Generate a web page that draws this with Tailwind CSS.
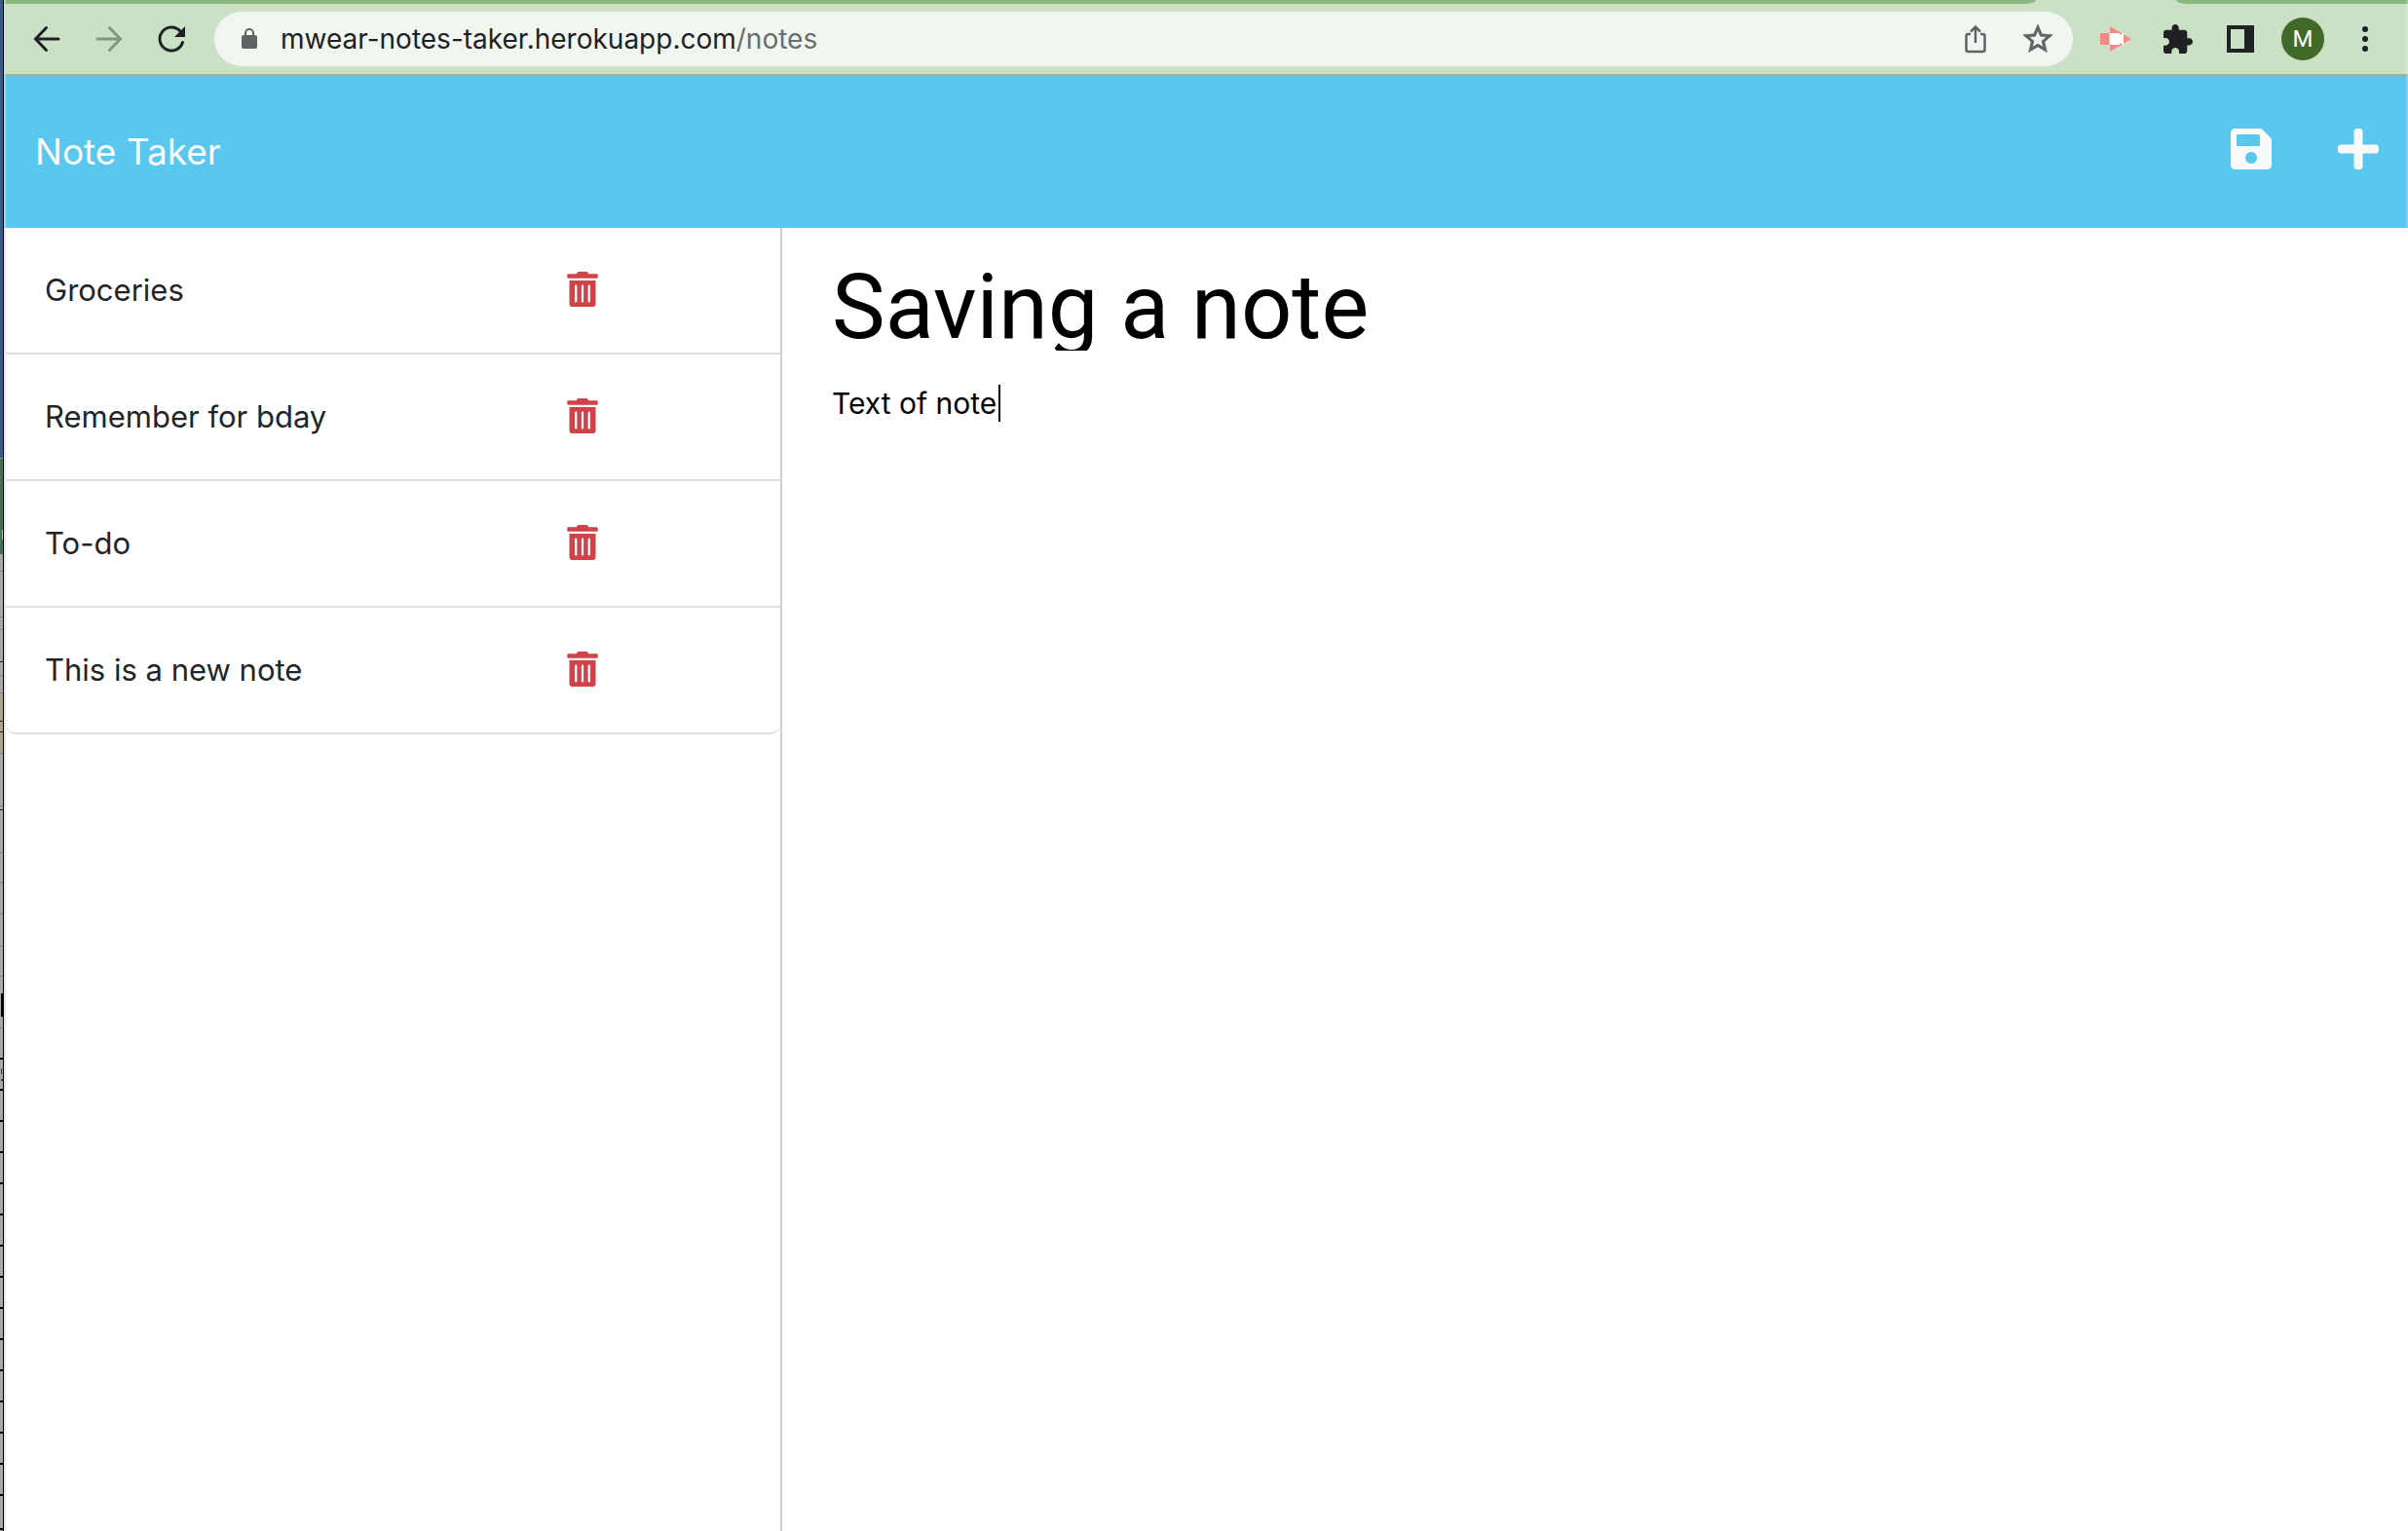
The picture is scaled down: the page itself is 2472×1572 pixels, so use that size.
<!DOCTYPE html>
<html lang="en">
<head>
<meta charset="utf-8">
<title>Note Taker</title>
<script src="https://cdn.jsdelivr.net/npm/@tailwindcss/browser@4"></script>
</head>
<body class="relative flex min-h-screen bg-white font-['Inter',sans-serif] text-[#212529]">

  <!-- Sliver of the window behind -->
  <div class="w-1 shrink-0 overflow-hidden border-r border-black bg-[#a9a9a7]" aria-hidden="true">
    <svg class="block h-[1572px] w-[3px]" viewBox="0 0 3 1572" shape-rendering="crispEdges">
      <rect width="3" height="470" fill="#3d5a85"/>
      <rect y="470" width="3" height="1" fill="#8b9a94"/>
      <rect y="471" width="3" height="98" fill="#4a6f57"/>
      <rect x="2" y="544" width="1" height="10" fill="#b6c4b9"/>
      <rect y="711" width="3" height="62" fill="#aca48e"/>
      <path d="M0 586.500h3M0 633.500h3M0 646.500h3M0 693.500h3M0 711.500h3M0 773.500h3M0 827.500h3M0 875.500h3M0 906.500h3M0 938.500h3M0 971.500h3M0 1002.500h3M0 1055.500h3" stroke="#858583" fill="none"/>
      <path d="M0 679.500h3M0 740.500h3M0 751.500h3M0 831.500h3" stroke="#222" fill="none"/>
      <rect x="1" y="1020" width="2" height="24" fill="#000"/>
      <rect x="1" y="1097" width="1" height="6" fill="#333"/>
      <rect x="1" y="1108" width="2" height="2" fill="#333"/>
      <path d="M0 1087h3M0 1119h3M0 1151h3M0 1183h3M0 1215h3M0 1247h3M0 1279h3M0 1311h3M0 1343h3M0 1375h3M0 1407h3M0 1439h3M0 1471h3M0 1503h3M0 1535h3M0 1570h3" stroke="#000" stroke-width="2" fill="none"/>
    </svg>
  </div>

  <div class="flex min-w-0 flex-1 flex-col">
    <!-- Browser chrome -->
    <div class="bg-[#cae1c6]">
      <div class="flex h-1 justify-between">
        <div class="mr-[144px] flex-1 rounded-br-[12px_4px] bg-[#88b77f]"></div>
        <div class="w-[238px] rounded-bl-[12px_4px] bg-[#88b77f]"></div>
      </div>
      <div class="flex h-[74px] items-center border-b-2 border-[#a5b09c] px-3">
        <button aria-label="Back" class="flex w-16 justify-center"><svg class="h-7 w-7" viewBox="0 0 28 28" fill="none" stroke="#202124" stroke-width="3" stroke-linecap="round"><path d="M26 14H3M13.500 2.500L2.500 14l11 11.500"/></svg></button>
        <button aria-label="Forward" class="flex w-16 justify-center"><svg class="h-7 w-7" viewBox="0 0 28 28" fill="none" stroke="#85957f" stroke-width="3" stroke-linecap="round"><path d="M2 14h23M14.500 2.500l11 11.500-11 11.500"/></svg></button>
        <button aria-label="Reload" class="flex w-16 justify-center"><svg class="h-7 w-7" viewBox="0 0 28 28" fill="none"><path d="M25.500 17.500A12 12 0 1 1 23 6" stroke="#202124" stroke-width="3" stroke-linecap="round"/><path d="M28 1v11H17z" fill="#202124"/></svg></button>
        <div class="ml-3 flex h-14 min-w-0 flex-1 items-center rounded-full bg-[#f1f7f0] pl-7 pr-1">
          <svg class="h-[22px] w-4 shrink-0" viewBox="0 0 16 22"><rect y="7" width="16" height="14" rx="2" fill="#5f6368"/><path d="M4 8V5a4 4 0 0 1 8 0v3" fill="none" stroke="#5f6368" stroke-width="2"/></svg>
          <div role="textbox" aria-label="Address" class="ml-6 flex-1 truncate text-[28px] leading-10 text-[#202124]">mwear-notes-taker.herokuapp.com<span class="text-[#6a6d6b]">/notes</span></div>
          <button aria-label="Share" class="flex w-16 justify-center"><svg class="h-[30px] w-6" viewBox="0 0 24 30" fill="none" stroke="#5f6368" stroke-width="2.500"><path d="M7 10H4.500a2 2 0 0 0-2 2v14a2 2 0 0 0 2 2h15a2 2 0 0 0 2-2V12a2 2 0 0 0-2-2H17M12 19V2.500M7 7.500l5-5 5 5"/></svg></button>
          <button aria-label="Bookmark this page" class="flex w-16 justify-center"><svg class="h-[30px] w-[30px]" viewBox="2 2 20 20" fill="#5f6368" stroke="#5f6368" stroke-width="0.500"><path d="M22 9.240l-7.190-.62L12 2 9.190 8.630 2 9.240l5.460 4.730L5.820 21 12 17.270 18.180 21l-1.630-7.030L22 9.240zM12 15.400l-3.760 2.270 1-4.280-3.320-2.880 4.380-.38L12 6.100l1.710 4.040 4.380.38-3.320 2.880 1 4.280L12 15.400z"/></svg></button>
        </div>
        <button aria-label="Screen recorder" class="ml-3 flex w-16 justify-center"><svg class="h-[26px] w-8" viewBox="0 0 32 26"><path d="M0 7h10V0l22 13-22 13v-7H0z" fill="#f28b88"/><path d="M9.500 7H19q1.500 0 1.500 2l3.500-2.500v13L20.500 17q0 2-1.500 2H9.500z" fill="#fff"/></svg></button>
        <button aria-label="Extensions" class="flex w-16 justify-center"><svg class="h-[30px] w-[30px]" viewBox="2 1 21 21" fill="#202124"><path d="M20.500 11H19V7c0-1.100-.9-2-2-2h-4V3.500C13 2.120 11.880 1 10.500 1S8 2.120 8 3.500V5H4c-1.100 0-1.990.9-1.990 2v3.800H3.500c1.490 0 2.700 1.210 2.700 2.700s-1.210 2.700-2.700 2.700H2V20c0 1.100.9 2 2 2h3.800v-1.500c0-1.490 1.210-2.700 2.700-2.700 1.490 0 2.700 1.210 2.700 2.700V22H17c1.100 0 2-.9 2-2v-4h1.500c1.380 0 2.500-1.120 2.500-2.500S21.880 11 20.500 11z"/></svg></button>
        <button aria-label="Side panel" class="flex w-16 justify-center"><svg class="h-7 w-7" viewBox="0 0 28 28"><path fill="#202124" fill-rule="evenodd" d="M0 0h28v28H0zM4 4v20h14V4z"/></svg></button>
        <button aria-label="Profile" class="flex w-16 justify-center"><span class="flex h-11 w-11 items-center justify-center rounded-full bg-[#416a29] font-['Roboto',sans-serif] text-[24px] text-white">M</span></button>
        <button aria-label="Menu" class="flex w-16 justify-center"><svg class="h-7 w-7" viewBox="0 0 28 28" fill="#202124"><circle cx="14" cy="4" r="3"/><circle cx="14" cy="14" r="3"/><circle cx="14" cy="24" r="3"/></svg></button>
      </div>
    </div>

    <!-- App -->
    <nav class="flex h-[156px] items-center justify-between bg-[#5ac8ee] pl-8 pr-[30px] text-[#f8f9fa]">
      <a href="/" class="text-[37px] leading-[56px]">Note Taker</a>
      <div class="flex gap-[68px] pb-1.5">
        <button aria-label="Save note"><svg class="block h-12 w-[42px]" viewBox="0 0 448 512" fill="currentColor"><path d="M433.941 129.941l-83.882-83.882A48 48 0 0 0 316.118 32H48C21.490 32 0 53.490 0 80v352c0 26.510 21.490 48 48 48h352c26.510 0 48-21.490 48-48V163.882a48 48 0 0 0-14.059-33.941zM224 416c-35.346 0-64-28.654-64-64 0-35.346 28.654-64 64-64s64 28.654 64 64c0 35.346-28.654 64-64 64zm96-304.520V212c0 6.627-5.373 12-12 12H76c-6.627 0-12-5.373-12-12V108c0-6.627 5.373-12 12-12h228.520c3.183 0 6.235 1.264 8.485 3.515l3.480 3.480A11.996 11.996 0 0 1 320 111.480z"/></svg></button>
        <button aria-label="New note"><svg class="block h-12 w-[42px]" viewBox="0 0 448 512" fill="currentColor"><path d="M416 208H272V64c0-17.670-14.330-32-32-32h-32c-17.670 0-32 14.330-32 32v144H32c-17.670 0-32 14.330-32 32v32c0 17.670 14.330 32 32 32h144v144c0 17.670 14.330 32 32 32h32c17.670 0 32-14.330 32-32V304h144c17.670 0 32-14.330 32-32v-32c0-17.670-14.330-32-32-32z"/></svg></button>
      </div>
    </nav>

    <svg class="hidden"><symbol id="trash" viewBox="0 0 448 512"><path fill="currentColor" d="M32 464a48 48 0 0 0 48 48h288a48 48 0 0 0 48-48V128H32zm272-256a16 16 0 0 1 32 0v224a16 16 0 0 1-32 0zm-96 0a16 16 0 0 1 32 0v224a16 16 0 0 1-32 0zm-96 0a16 16 0 0 1 32 0v224a16 16 0 0 1-32 0zM432 32H312l-9.400-18.700A24 24 0 0 0 281.100 0H166.800a23.720 23.720 0 0 0-21.400 13.300L136 32H16A16 16 0 0 0 0 48v32a16 16 0 0 0 16 16h416a16 16 0 0 0 16-16V48a16 16 0 0 0-16-16z"/></symbol></svg>

    <div class="flex flex-1">
      <aside class="w-[799px] shrink-0 border-r-2 border-[#d0d0d0] pl-0.5">
        <ul class="overflow-hidden rounded-b-[10px] border-b-2 border-[#dfdfdf] text-[31px] leading-[48px] divide-y-2 divide-[#dfdfdf]">
          <li class="flex h-[130px] items-center justify-between pl-10 pr-[187px]"><span>Groceries</span><button aria-label="Delete Groceries" class="pb-0.5 text-[#cf4349]"><svg class="block h-9 w-8"><use href="#trash"/></svg></button></li>
          <li class="flex h-[130px] items-center justify-between pl-10 pr-[187px]"><span>Remember for bday</span><button aria-label="Delete Remember for bday" class="pb-0.5 text-[#cf4349]"><svg class="block h-9 w-8"><use href="#trash"/></svg></button></li>
          <li class="flex h-[130px] items-center justify-between pl-10 pr-[187px]"><span>To-do</span><button aria-label="Delete To-do" class="pb-0.5 text-[#cf4349]"><svg class="block h-9 w-8"><use href="#trash"/></svg></button></li>
          <li class="flex h-32 items-center justify-between pl-10 pr-[187px]"><span>This is a new note</span><button aria-label="Delete This is a new note" class="pb-0.5 text-[#cf4349]"><svg class="block h-9 w-8"><use href="#trash"/></svg></button></li>
        </ul>
      </aside>

      <main class="flex min-w-0 flex-1 flex-col gap-[30px] px-[51px] pt-9 text-black">
        <input aria-label="Note title" value="Saving a note" class="h-[90px] w-full font-['Roboto',sans-serif] text-[92px] leading-[90px] outline-none">
        <div class="relative flex flex-1">
          <textarea aria-label="Note text" class="w-full resize-none text-[30px] leading-[48px] outline-none">Text of note</textarea>
          <span class="absolute left-[171px] top-[5px] h-[38px] w-0.5 bg-black"></span>
        </div>
      </main>
    </div>
  </div>

  <!-- Window edge highlights -->
  <div class="pointer-events-none absolute inset-y-0 left-1 w-0.5 bg-[#d8d8d8]/60" aria-hidden="true"></div>
  <div class="pointer-events-none absolute inset-y-0 right-0 w-0.5 bg-white/20" aria-hidden="true"></div>
</body>
</html>
